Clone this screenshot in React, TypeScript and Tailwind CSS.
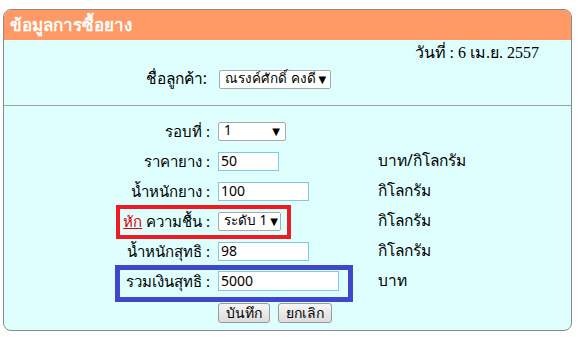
import React from "react";

const sel =
  "h-[19px] bg-white border border-[#a9a9a9] rounded-[2px] flex items-center justify-between pl-[5px] pr-[5px] text-[13.5px] text-black leading-none whitespace-nowrap";
const inp =
  "h-[19px] bg-white border border-[#7fc9e6] flex items-center pl-[2px] text-[14px] text-black leading-none";
const btn =
  "h-[20px] px-[7px] border border-[#9a9a9a] rounded-[3px] bg-gradient-to-b from-[#f6f6f6] to-[#dcdcdc] text-[14px] text-black flex items-center leading-none whitespace-nowrap";

function Arrow() {
  return <span className="text-[10px] leading-none ml-[3px] shrink-0">▼</span>;
}

function Row({ label, field, unit }: { label: React.ReactNode; field: React.ReactNode; unit?: string }) {
  return (
    <>
      <div className="h-[30px] flex items-center justify-end pr-[8px] text-[15px] whitespace-nowrap">{label}</div>
      <div className="h-[30px] flex items-center">{field}</div>
      <div className="h-[30px] flex items-center text-[15.5px]">{unit}</div>
    </>
  );
}

export default function App() {
  return (
    <div className="w-[579px] h-[337px] bg-white pt-[9px] pl-[3px]" style={{ fontFamily: 'Tahoma, "Noto Sans", "DejaVu Sans", sans-serif' }}>
      <div className="w-[569px] h-[322px] border border-[#8a8a8a] rounded-[8px] overflow-hidden bg-[#dfffff] flex flex-col">
        <div className="h-[30px] bg-[#ff9966] flex items-center pl-[6px] text-white font-bold text-[17px] shrink-0">
          ข้อมูลการซื้อยาง
        </div>
        <div className="h-[22px] mt-[2px] flex items-center justify-end pr-[32px] text-[16px] text-black" style={{ fontFamily: '"Liberation Serif", "Times New Roman", serif' }}>
          วันที่ : 6 เม.ย. 2557
        </div>
        <div className="h-[30px] flex items-center">
          <div className="w-[203px] text-right text-[15.5px] whitespace-nowrap">ชื่อลูกค้า:</div>
          <div className="ml-[12px]">
            <div className={`${sel} w-[112px] text-[12.5px] pl-[5px] pr-[5px]`}>
              <span>ณรงค์ศักดิ์ คงดี</span>
              <Arrow />
            </div>
          </div>
        </div>
        <div className="mt-[11px] border-t border-[#a0a0a0]" />
        <div className="relative mt-[10px]">
          <div className="grid grid-cols-[214px_160px_1fr]">
            <Row label="รอบที่ :" field={<div className={`${sel} w-[68px]`}><span>1</span><Arrow /></div>} />
            <Row label="ราคายาง :" field={<div className={`${inp} w-[61px]`}>50</div>} unit="บาท/กิโลกรัม" />
            <Row label="น้ำหนักยาง :" field={<div className={`${inp} w-[91px]`}>100</div>} unit="กิโลกรัม" />
            <Row
              label={
                <span>
                  <span className="text-[#e00000] underline">หัก</span> ความชื้น :
                </span>
              }
              field={<div className={`${sel} w-[63px] pl-[4px] pr-[4px]`}><span>ระดับ 1</span><Arrow /></div>}
              unit="กิโลกรัม"
            />
            <Row label="น้ำหนักสุทธิ :" field={<div className={`${inp} w-[91px]`}>98</div>} unit="กิโลกรัม" />
            <Row label="รวมเงินสุทธิ :" field={<div className={`${inp} w-[121px] h-[20px]`}>5000</div>} unit="บาท" />
          </div>
          <div className="flex gap-[8px] pl-[214px] pt-[7px]">
            <div className={btn}>บันทึก</div>
            <div className={btn}>ยกเลิก</div>
          </div>
          <div className="absolute left-[112px] top-[89px] w-[175px] h-[34px] border-[4px] border-[#ed1c24]" />
          <div className="absolute left-[111px] top-[149px] w-[238px] h-[37px] border-[5px] border-[#3f48cc]" />
        </div>
      </div>
    </div>
  );
}
